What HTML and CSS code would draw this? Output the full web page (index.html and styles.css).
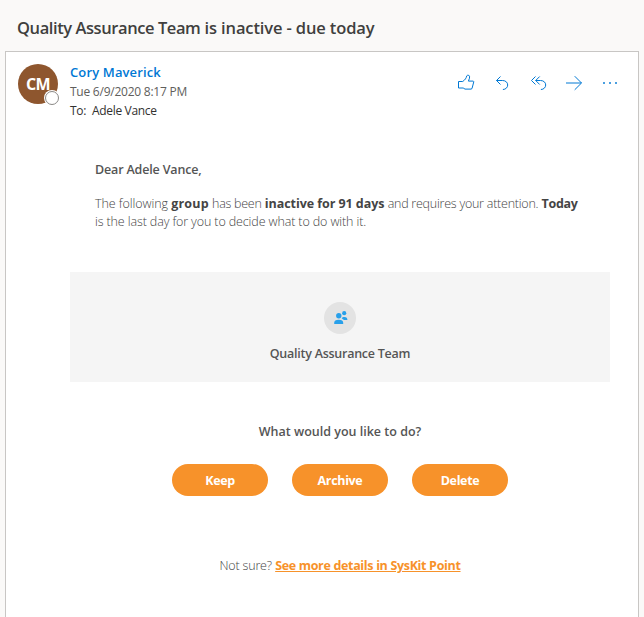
FILE: index.html
```html
<!DOCTYPE html>
<html lang="en">
<head>
<meta charset="utf-8">
<title>Quality Assurance Team is inactive - due today</title>
<link rel="stylesheet" href="styles.css">
</head>
<body>
<h1 class="subject"><span class="subject-team">Quality Assurance Team</span> is inactive - due today</h1>
<main class="message">
  <header class="header">
    <div class="avatar">CM<i class="presence"></i></div>
    <div class="meta">
      <div class="sender">Cory Maverick</div>
      <div class="date">Tue 6/9/2020 8:17 PM</div>
      <div class="recipient"><span class="to">To:</span><span class="name">Adele Vance</span></div>
    </div>
    <nav class="actions">
      <svg viewBox="0 0 18 18"><path d="M1.5 7.5H5.7C8.2 5.8 9.2 4.2 9.8 1.8L10.4 1.3H11.8L12.5 2.2V4.2L11.4 7.1H16.3L16.8 7.7L15 14.6L14 15.1H8L6.2 14H1.5Z"/></svg>
      <svg viewBox="0 0 18 18"><path d="M7.5 2.5L3.5 6.5L7.5 10.5M3.5 6.5H9.5C12.7 6.5 14.7 8.5 14.7 11C14.7 13.4 12.7 15.5 9.9 15.5"/></svg>
      <svg viewBox="0 0 18 18"><path d="M6.5 2.5L2.5 6.5L6.5 10.5M10.7 2.5L6.7 6.5L10.7 10.5M6.7 6.5H11.5C14.7 6.5 16.7 8.5 16.7 11C16.7 13.4 14.7 15.5 11.9 15.5"/></svg>
      <svg viewBox="0 0 18 18"><path d="M1 9H16.5M9.7 2.2L16.5 9L9.7 15.8"/></svg>
      <svg class="dots" viewBox="0 0 18 18"><path d="M2 8h2v2H2zM8 8h2v2H8zM14 8h2v2h-2z"/></svg>
    </nav>
  </header>
  <article class="body">
    <div class="intro">
      <p class="greeting">Dear Adele Vance,</p>
      <p class="text"><span class="following">The following</span> <b class="group">group</b> <span class="has">has been</span> <b class="days">inactive for 91 days</b> <span class="requires">and requires your attention.</span> <b class="today">Today</b><br><span class="last">is the last day for you to decide what to do with it.</span></p>
    </div>
    <section class="card">
      <div class="badge"><svg viewBox="0 0 14 14"><circle cx="4.8" cy="4.7" r="2.7"/><path d="M.2 13V11.8C.2 9.8 1.7 8.7 4.7 8.7S9.2 9.8 9.2 11.8V13Z"/><circle cx="10.2" cy="2.2" r="2.1"/><path d="M7.7 7.2C8.2 6.3 9 5.9 10.4 5.9C12.5 5.9 13.4 6.9 13.4 9H10C9.3 8.4 8.4 8 7.7 7.2Z"/></svg></div>
      <div class="team">Quality Assurance Team</div>
    </section>
    <p class="question">What would you like to do?</p>
    <div class="buttons">
      <a class="button">Keep</a>
      <a class="button">Archive</a>
      <a class="button">Delete</a>
    </div>
    <p class="more"><span class="unsure">Not sure?</span> <b class="link">See more details in SysKit Point</b></p>
  </article>
</main>
</body>
</html>
```
FILE: styles.css
```css
* { box-sizing: border-box; }
body { margin: 0; height: 617px; overflow: hidden; background: #faf9f8; font-family: "Open Sans", sans-serif; font-size: 12.5px; color: #555; }
p, h1 { margin: 0; }
.subject { height: 51px; padding: 16px 0 0 17px; font-size: 16.5px; line-height: 24px; font-weight: 600; letter-spacing: -.13px; color: #403f3e; }
.subject-team { letter-spacing: -.42px; }
.message { margin-left: 5px; width: 634px; height: 566px; padding: 0 28px 0 12px; background: #fff; border: 1px solid #c8c6c4; border-bottom: 0; }
.header { display: flex; height: 106px; padding-top: 12px; }
.avatar { position: relative; width: 40px; height: 40px; border-radius: 50%; background: #8e562e; color: #fff; font-size: 16px; font-weight: 700; letter-spacing: -.6px; line-height: 40px; text-align: center; }
.presence { position: absolute; left: 27px; top: 27px; width: 14px; height: 14px; border-radius: 50%; background: #fff; border: 1px solid #8a8886; box-shadow: 0 0 0 1px #fff; }
.meta { margin-left: 12px; margin-top: -1px; white-space: nowrap; font-size: 12px; }
.sender { font-size: 13px; line-height: 18px; font-weight: 600; letter-spacing: .13px; color: #0078d4; }
.date { line-height: 21px; letter-spacing: -.24px; color: #605e5c; }
.recipient { line-height: 18px; letter-spacing: -.33px; color: #323130; }
.name { margin-left: 6px; }
.actions { display: flex; gap: 18px; margin-left: auto; margin-right: -9px; padding-top: 10px; }
.actions svg { width: 18px; height: 18px; fill: none; stroke: #0078d4; stroke-width: 1; }
.actions .dots { fill: #4a9fe0; stroke: none; }
.body { margin-left: 52px; width: 540px; }
.intro { height: 114px; padding: 3px 0 0 25px; white-space: nowrap; }
.greeting { line-height: 18px; font-weight: 600; letter-spacing: -.16px; }
.text { margin-top: 16px; line-height: 18px; font-weight: 300; color: #444; }
.text b { font-weight: 700; }
.following { letter-spacing: -.07px; }
.group { letter-spacing: .2px; }
.has { letter-spacing: -.27px; }
.days { letter-spacing: -.06px; }
.requires { letter-spacing: -.24px; }
.today { letter-spacing: -.3px; }
.last { letter-spacing: -.12px; }
.card { height: 110px; padding-top: 30px; background: #f5f5f5; text-align: center; }
.badge { width: 32px; height: 32px; margin: 0 auto; padding: 9px; border-radius: 50%; background: #e3e3e3; }
.badge svg { display: block; width: 14px; height: 14px; margin-left: 1px; fill: #28a0ea; }
.team { margin-top: 10px; line-height: 20px; font-weight: 600; letter-spacing: -.25px; }
.question { margin-top: 41px; line-height: 18px; font-weight: 600; text-align: center; }
.buttons { display: flex; justify-content: center; gap: 24px; margin-top: 23px; }
.button { width: 96px; height: 32px; padding-top: 1px; border-radius: 16px; background: #f7922a; color: #fff; font-weight: 700; line-height: 32px; letter-spacing: -.35px; text-align: center; }
.more { margin-top: 61px; line-height: 18px; font-weight: 300; text-align: center; color: #444; }
.unsure { letter-spacing: -.17px; }
.link { color: #f7922a; font-weight: 700; letter-spacing: -.33px; text-decoration: underline; }
```
